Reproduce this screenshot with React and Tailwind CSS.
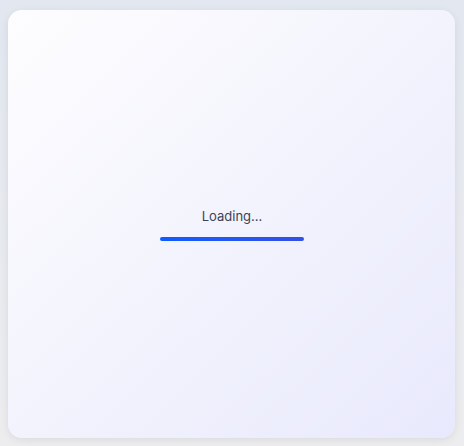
export default function App() {
  return (
    <div className="w-[464px] h-[446px] bg-gradient-to-b from-[#e2e7f0] to-[#ededef] pt-[10px] pl-[8px] overflow-hidden">
      <div className="w-[447px] h-[428px] rounded-[14px] bg-gradient-to-br from-[#fdfdff] via-[#f3f3fd] to-[#e8e9fc] shadow-[0_2px_8px_rgba(0,0,0,0.08)] flex flex-col items-center justify-center">
        <div className="flex flex-col items-center gap-[13px] ml-[1px]">
          <p className="text-[13px] text-[#3b4358] font-['Inter',sans-serif] leading-[16px]">Loading...</p>
          <div className="w-[144px] h-[4px] rounded-full bg-gradient-to-r from-[#0a5cff] to-[#3150e6]" />
        </div>
      </div>
    </div>
  );
}
